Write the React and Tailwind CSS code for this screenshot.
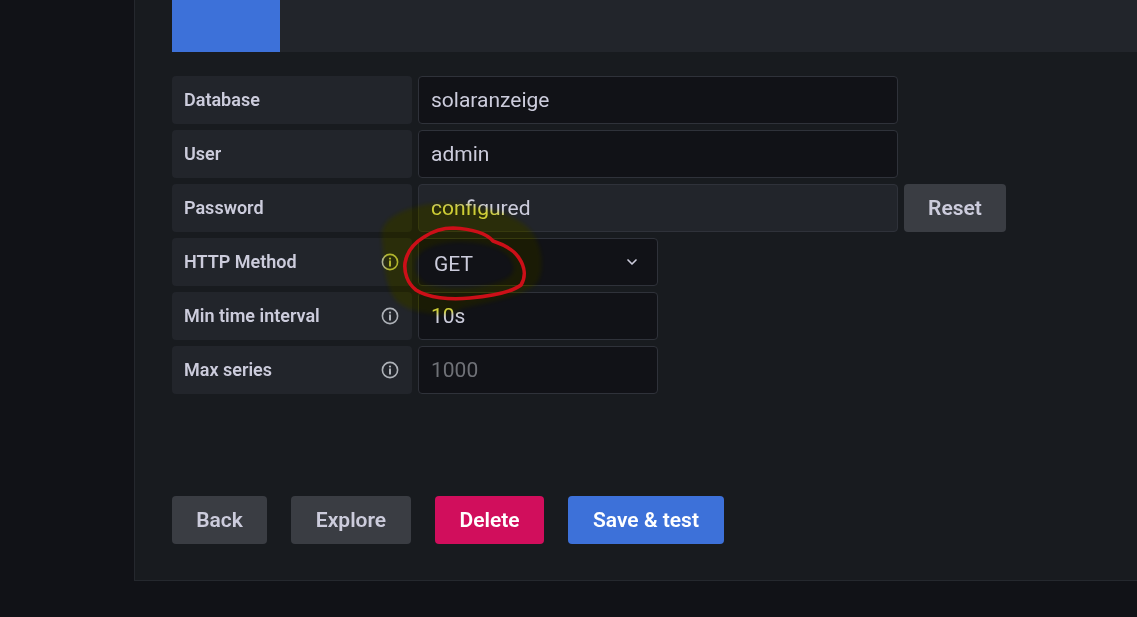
import { ChevronDown } from "lucide-react";

const font = { fontFamily: "Roboto, sans-serif" };

const blob =
  "M382 240 C379 222 395 212 420 206 C445 200 470 204 490 210 C505 213 520 220 528 228 C541 240 546 265 538 282 C525 296 490 302 462 308 C450 320 402 314 393 296 C384 280 384 260 382 240Z M424 250 C412 258 412 276 426 284 C450 292 495 288 510 276 C520 266 508 250 490 246 C470 240 440 240 424 250Z";

function InfoIcon() {
  return (
    <svg width="18" height="18" viewBox="0 0 18 18" fill="none" className="text-[#aeb2b8]">
      <circle cx="9" cy="9" r="7.6" stroke="currentColor" strokeWidth="1.6" />
      <circle cx="9" cy="5.6" r="1.1" fill="currentColor" />
      <path d="M9 8.2v4.6" stroke="currentColor" strokeWidth="2" strokeLinecap="round" />
    </svg>
  );
}

function Label({ children, info }) {
  return (
    <div className="w-[240px] h-12 mr-1.5 pl-3 pr-[13.5px] bg-[#22252b] rounded-sm flex items-center justify-between shrink-0 text-[#ccccdc] font-semibold">
      <span className="text-[18px] pb-0.5">{children}</span>
      {info && <InfoIcon />}
    </div>
  );
}

function Field({ width, children, muted }) {
  return (
    <div
      className={`${width} h-12 px-3 pt-0.5 bg-[#111217] border border-[#2f323a] rounded-sm flex items-center text-[21px] ${
        muted ? "text-[#6f7177]" : "text-[#ccccdc]"
      }`}
    >
      {children}
    </div>
  );
}

function Button({ className, children }) {
  return (
    <button className={`h-12 pt-0.5 rounded-sm text-[21px] font-semibold ${className}`}>{children}</button>
  );
}

export default function App() {
  return (
    <div className="relative h-[617px] overflow-hidden bg-[#111217] pl-[134px]" style={font}>
      <div className="h-[581px] bg-[#181b1f] border-l border-b border-[#25282e] pl-[37px] flex flex-col">
        <div className="h-[52px] bg-[#22252b] shrink-0">
          <div className="w-[108px] h-full bg-[#3d71d9]" />
        </div>

        <div className="mt-6 flex flex-col gap-1.5">
          <div className="flex">
            <Label>Database</Label>
            <Field width="w-[480px]">solaranzeige</Field>
          </div>
          <div className="flex">
            <Label>User</Label>
            <Field width="w-[480px]">admin</Field>
          </div>
          <div className="flex">
            <Label>Password</Label>
            <div className="w-[480px] h-12 px-3 pt-0.5 bg-[#22252b] border border-[#2f323a] rounded-sm flex items-center text-[21px] text-[#ccccdc]">
              configured
            </div>
            <Button className="w-[102px] ml-1.5 bg-[#3a3d43] text-[#ccccdc]">Reset</Button>
          </div>
          <div className="flex">
            <Label info>HTTP Method</Label>
            <div className="w-[240px] h-12 pl-[15px] pr-[17px] bg-[#111217] border border-[#2f323a] rounded-sm flex items-center justify-between text-[21px] text-[#ccccdc]">
              <span className="pt-1.5">GET</span>
              <ChevronDown size={16} strokeWidth={2.5} />
            </div>
          </div>
          <div className="flex">
            <Label info>Min time interval</Label>
            <Field width="w-[240px]">10s</Field>
          </div>
          <div className="flex">
            <Label info>Max series</Label>
            <Field width="w-[240px]" muted>1000</Field>
          </div>
        </div>

        <div className="mt-[102px] flex gap-6">
          <Button className="w-[95px] bg-[#3a3d43] text-[#ccccdc]">Back</Button>
          <Button className="w-[120px] bg-[#3a3d43] text-[#ccccdc]">Explore</Button>
          <Button className="w-[109px] bg-[#d10e5c] text-white">Delete</Button>
          <Button className="w-[156px] bg-[#3d71d9] text-white">Save &amp; test</Button>
        </div>
      </div>

      {/* marker scribbles drawn on top of the screenshot */}
      <svg className="absolute left-0 top-0 pointer-events-none mix-blend-multiply" width="1137" height="617" viewBox="0 0 1137 617" fill="none">
        <path className="blur-[2px]" fillRule="evenodd" fill="#ffff40" d={blob} />
      </svg>
      <svg className="absolute left-0 top-0 pointer-events-none" width="1137" height="617" viewBox="0 0 1137 617" fill="none">
        <path className="blur-[2px]" fillRule="evenodd" fill="#ffff00" fillOpacity="0.04" d={blob} />
        <path
          d="M453 228 C472 229 486 233 493 241 C505 245 514 250 519 258 C525 267 526 277 521 285 C512 292 490 296 470 298 C450 300 428 298 416 290 C407 283 404 272 405 263 C407 251 414 243 424 237 C433 231 443 228 453 228Z"
          stroke="#cc0f18"
          strokeWidth="3.6"
          strokeLinecap="round"
          strokeLinejoin="round"
        />
      </svg>
    </div>
  );
}
